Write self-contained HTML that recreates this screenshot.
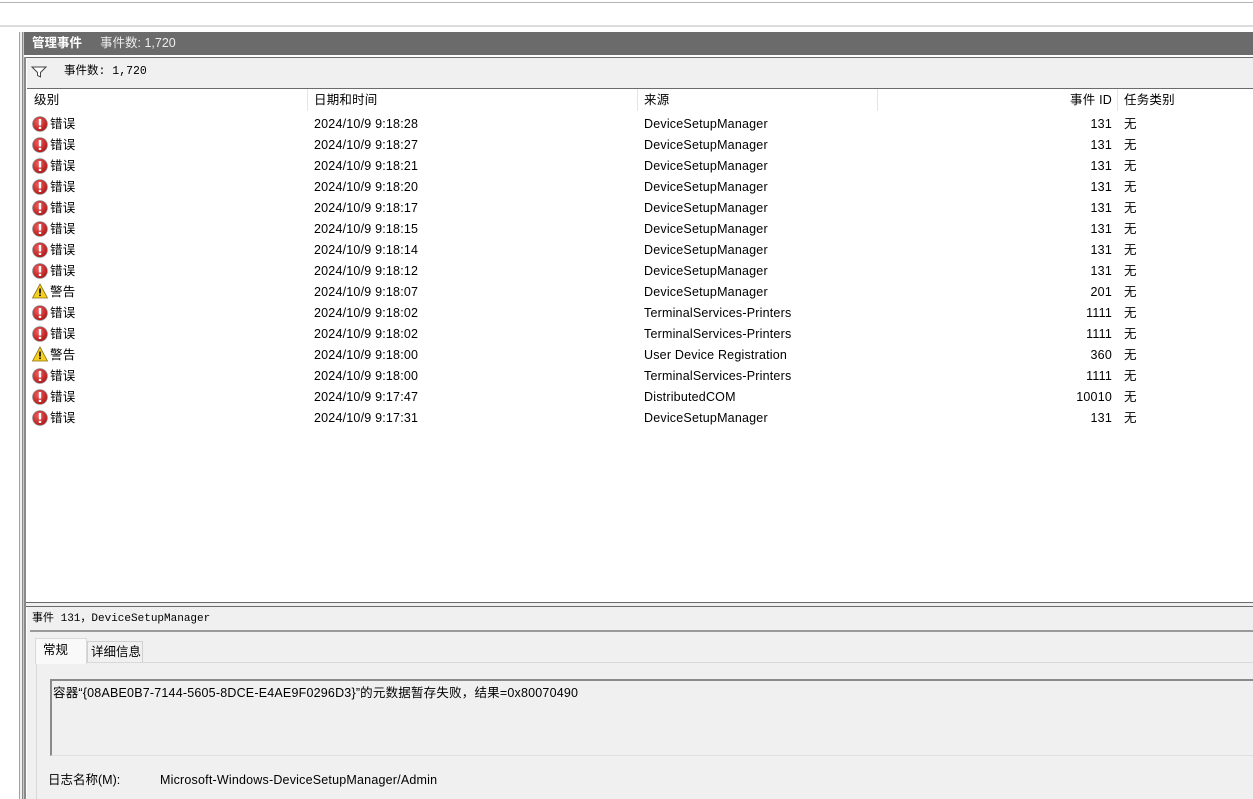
<!DOCTYPE html>
<html><head><meta charset="utf-8"><style>
*{margin:0;padding:0;box-sizing:border-box}
body{width:1253px;height:799px;background:#fff;position:relative;overflow:hidden;font-family:"Liberation Sans","Noto Sans CJK SC",sans-serif;font-size:12px;color:#000}
.abs{position:absolute}
.row{position:absolute;left:27px;width:1226px;height:21px;line-height:21px;font-size:12.5px;letter-spacing:0.2px}
.row span{position:absolute;top:0;white-space:nowrap}
.ic{position:absolute;left:5px;top:3px;width:16px;height:16px}
.t{line-height:16px;height:16px;white-space:nowrap}
</style></head><body>
<div class="abs" style="left:0;top:2px;width:1253px;height:1px;background:#b4b4b4"></div>
<div class="abs" style="left:0;top:25px;width:1253px;height:2px;background:#dcdcdc"></div>
<div class="abs" style="left:19px;top:32px;width:1px;height:767px;background:#a0a0a0"></div>
<div class="abs" style="left:20px;top:32px;width:2px;height:767px;background:#f0f0f0"></div>
<div class="abs" style="left:22px;top:32px;width:4px;height:767px;background:#8a8a8a"></div>
<div class="abs" style="left:23px;top:32px;width:1px;height:767px;background:#c8c8c8"></div>
<div class="abs" style="left:24px;top:32px;width:1229px;height:23px;background:#6b6b6b;color:#fff;font-size:12.5px;line-height:23px">
<span style="position:absolute;left:8px;font-weight:bold">管理事件</span><span style="position:absolute;left:76px;color:#eee">事件数: 1,720</span></div>
<div class="abs" style="left:24px;top:55px;width:1229px;height:2px;background:#fff"></div>
<div class="abs" style="left:26px;top:57px;width:1227px;height:1px;background:#6b6b6b"></div>
<div class="abs" style="left:27px;top:58px;width:1226px;height:30px;background:#f0f0f0">
<svg class="abs" style="left:4px;top:8px" width="16" height="12" viewBox="0 0 16 12"><path d="M1 1H15L9.5 6.5V11L6.5 9.5V6.5Z" fill="#fff" stroke="#444" stroke-width="1"/></svg>
<span class="abs t" style="left:37px;top:6px;font-family:'Liberation Mono','Noto Sans CJK SC',monospace;font-size:11.5px">事件数: 1,720</span></div>
<div class="abs" style="left:27px;top:88px;width:1226px;height:1px;background:#6b6b6b"></div>
<div class="abs" style="left:27px;top:89px;width:1226px;height:513px;background:#fff"></div>
<div class="row" style="top:90px"><span style="left:7px">级别</span><span style="left:287px">日期和时间</span><span style="left:617px">来源</span><span style="right:141px">事件 ID</span><span style="left:1097px">任务类别</span></div>
<div class="abs" style="left:307px;top:89px;width:1px;height:22px;background:#e5e5e5"></div>
<div class="abs" style="left:637px;top:89px;width:1px;height:22px;background:#e5e5e5"></div>
<div class="abs" style="left:877px;top:89px;width:1px;height:22px;background:#e5e5e5"></div>
<div class="abs" style="left:1117px;top:89px;width:1px;height:22px;background:#e5e5e5"></div>
<svg width="0" height="0" style="position:absolute"><defs>
<radialGradient id="rg" cx="40%" cy="35%" r="70%"><stop offset="0" stop-color="#f06060"/><stop offset="1" stop-color="#b01010"/></radialGradient>
<symbol id="err" viewBox="0 0 16 16"><circle cx="8" cy="8" r="7.4" fill="url(#rg)" stroke="#8a8a8a" stroke-width="0.8"/><rect x="6.8" y="3" width="2.4" height="6.5" fill="#fff"/><rect x="6.8" y="10.8" width="2.4" height="2.2" fill="#fff"/></symbol>
<symbol id="warn" viewBox="0 0 16 16"><path d="M8 1L15.5 15H0.5Z" fill="#f5d020" stroke="#8a7010" stroke-width="0.8"/><rect x="7.2" y="5.5" width="1.6" height="5" fill="#000"/><rect x="7.2" y="11.5" width="1.6" height="1.6" fill="#000"/></symbol>
</defs></svg>
<div id="rows"></div>
<script>
var d=[["e","9:18:28","DeviceSetupManager","131"],["e","9:18:27","DeviceSetupManager","131"],["e","9:18:21","DeviceSetupManager","131"],["e","9:18:20","DeviceSetupManager","131"],["e","9:18:17","DeviceSetupManager","131"],["e","9:18:15","DeviceSetupManager","131"],["e","9:18:14","DeviceSetupManager","131"],["e","9:18:12","DeviceSetupManager","131"],["w","9:18:07","DeviceSetupManager","201"],["e","9:18:02","TerminalServices-Printers","1111"],["e","9:18:02","TerminalServices-Printers","1111"],["w","9:18:00","User Device Registration","360"],["e","9:18:00","TerminalServices-Printers","1111"],["e","9:17:47","DistributedCOM","10010"],["e","9:17:31","DeviceSetupManager","131"]];
var h="";d.forEach(function(r,i){h+='<div class="row" style="top:'+(114+i*21)+'px"><svg class="ic" style="top:'+(r[0]=="e"?2:1)+'px"><use href="#'+(r[0]=="e"?"err":"warn")+'"/></svg><span style="left:23px">'+(r[0]=="e"?"错误":"警告")+'</span><span style="left:287px">2024/10/9 '+r[1]+'</span><span style="left:617px">'+r[2]+'</span><span style="right:141px">'+r[3]+'</span><span style="left:1097px">无</span></div>';});
document.getElementById("rows").innerHTML=h;
</script>
<div class="abs" style="left:26px;top:602px;width:1227px;height:1px;background:#6b6b6b"></div>
<div class="abs" style="left:26px;top:603px;width:1227px;height:3px;background:#f0f0f0"></div>
<div class="abs" style="left:26px;top:606px;width:1227px;height:1px;background:#6b6b6b"></div>
<div class="abs" style="left:27px;top:607px;width:1226px;height:192px;background:#f0f0f0"></div>
<span class="abs t" style="left:32px;top:611px;font-family:'Liberation Mono','Noto Sans CJK SC',monospace;font-size:11px">事件 131，DeviceSetupManager</span>
<div class="abs" style="left:30px;top:630px;width:1223px;height:2px;background:#9a9a9a"></div>
<div class="abs" style="left:36px;top:662px;width:1217px;height:137px;background:#f0f0f0;border-top:1px solid #d9d9d9;border-left:1px solid #d9d9d9"></div>
<div class="abs" style="left:35px;top:638px;width:52px;height:26px;background:#f9f9f9;border:1px solid #d9d9d9;border-bottom:none;font-size:12.5px;line-height:16px;padding:3px 0 0 7px">常规</div>
<div class="abs" style="left:87px;top:641px;width:56px;height:21px;background:#f0f0f0;border:1px solid #d0d0d0;border-bottom:none;font-size:12.5px;line-height:16px;padding:2px 0 0 3px">详细信息</div>
<div class="abs" style="left:50px;top:679px;width:1203px;height:77px;border:2px solid #8a8a8a;border-right:none;border-bottom:1px solid #e0e0e0;background:#f0f0f0"></div>
<span class="abs t" style="left:53px;top:685px;font-size:12.5px;letter-spacing:0.2px">容器“{08ABE0B7-7144-5605-8DCE-E4AE9F0296D3}”的元数据暂存失败，结果=0x80070490</span>
<span class="abs t" style="left:48px;top:772px;font-size:12.5px">日志名称(M):</span>
<span class="abs t" style="left:160px;top:772px;font-size:12.5px;letter-spacing:0.2px">Microsoft-Windows-DeviceSetupManager/Admin</span>
</body></html>
